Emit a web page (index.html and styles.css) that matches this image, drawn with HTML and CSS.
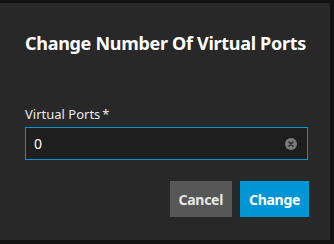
FILE: index.html
```html
<!DOCTYPE html>
<html lang="en">
<head>
	<meta charset="UTF-8">
	<title>Change Number Of Virtual Ports</title>
	<link rel="stylesheet" href="styles.css">
</head>
<body>
	<div class="dialog">
		<h1 class="dialog-title">Change Number Of Virtual Ports</h1>
		<form class="dialog-form">
			<label class="field-label" for="ports">Virtual Ports<span class="required">*</span></label>
			<div class="field-box">
				<input id="ports" class="field-input" type="text" value="0">
				<span class="field-clear">
					<svg width="12" height="12" viewBox="0 0 12 12">
						<circle cx="6" cy="6" r="6" fill="#7a7a7a"/>
						<path d="M4 4 L8 8 M8 4 L4 8" stroke="#282828" stroke-width="1.6" stroke-linecap="round"/>
					</svg>
				</span>
			</div>
			<div class="dialog-actions">
				<button type="button" class="btn btn-cancel">Cancel</button>
				<button type="button" class="btn btn-primary">Change</button>
			</div>
		</form>
	</div>
</body>
</html>
```

FILE: styles.css
```css
html, body {
	margin: 0;
	height: 100%;
	background: #111111;
}

body {
	padding: 3px 4px 4px 0;
	box-sizing: border-box;
	font-family: "Noto Sans", sans-serif;
	color: #ffffff;
}

.dialog {
	height: 100%;
	background: #282828;
	padding: 0 22px 0 25px;
	box-sizing: border-box;
}

.dialog-title {
	margin: 0;
	padding-top: 28px;
	font-size: 18px;
	font-weight: 700;
	line-height: 24px;
	letter-spacing: -0.3px;
}

.dialog-form {
	margin-top: 50px;
}

.field-label {
	display: block;
	font-size: 13px;
	line-height: 18px;
	color: #e8e8e8;
}

.required {
	margin-left: 2px;
}

.field-box {
	margin-top: 4px;
	display: flex;
	align-items: center;
	height: 33px;
	border: 1px solid #0095d5;
	background: #1e1e1e;
	box-sizing: border-box;
	padding: 0 10px 0 8px;
}

.field-input {
	flex: 1;
	border: 0;
	outline: 0;
	background: transparent;
	color: #ffffff;
	font-family: inherit;
	font-size: 14px;
	padding: 0;
}

.field-clear {
	display: flex;
}

.dialog-actions {
	display: flex;
	justify-content: flex-end;
	gap: 8px;
	margin-top: 21px;
	margin-right: -1px;
}

.btn {
	height: 36px;
	border: 0;
	padding: 0 9px;
	font-family: inherit;
	font-size: 14px;
	font-weight: 700;
	letter-spacing: -0.3px;
	color: #ffffff;
}

.btn-cancel {
	background: #575757;
	color: #e6e6e6;
}

.btn-primary {
	background: #0095d5;
}
```
